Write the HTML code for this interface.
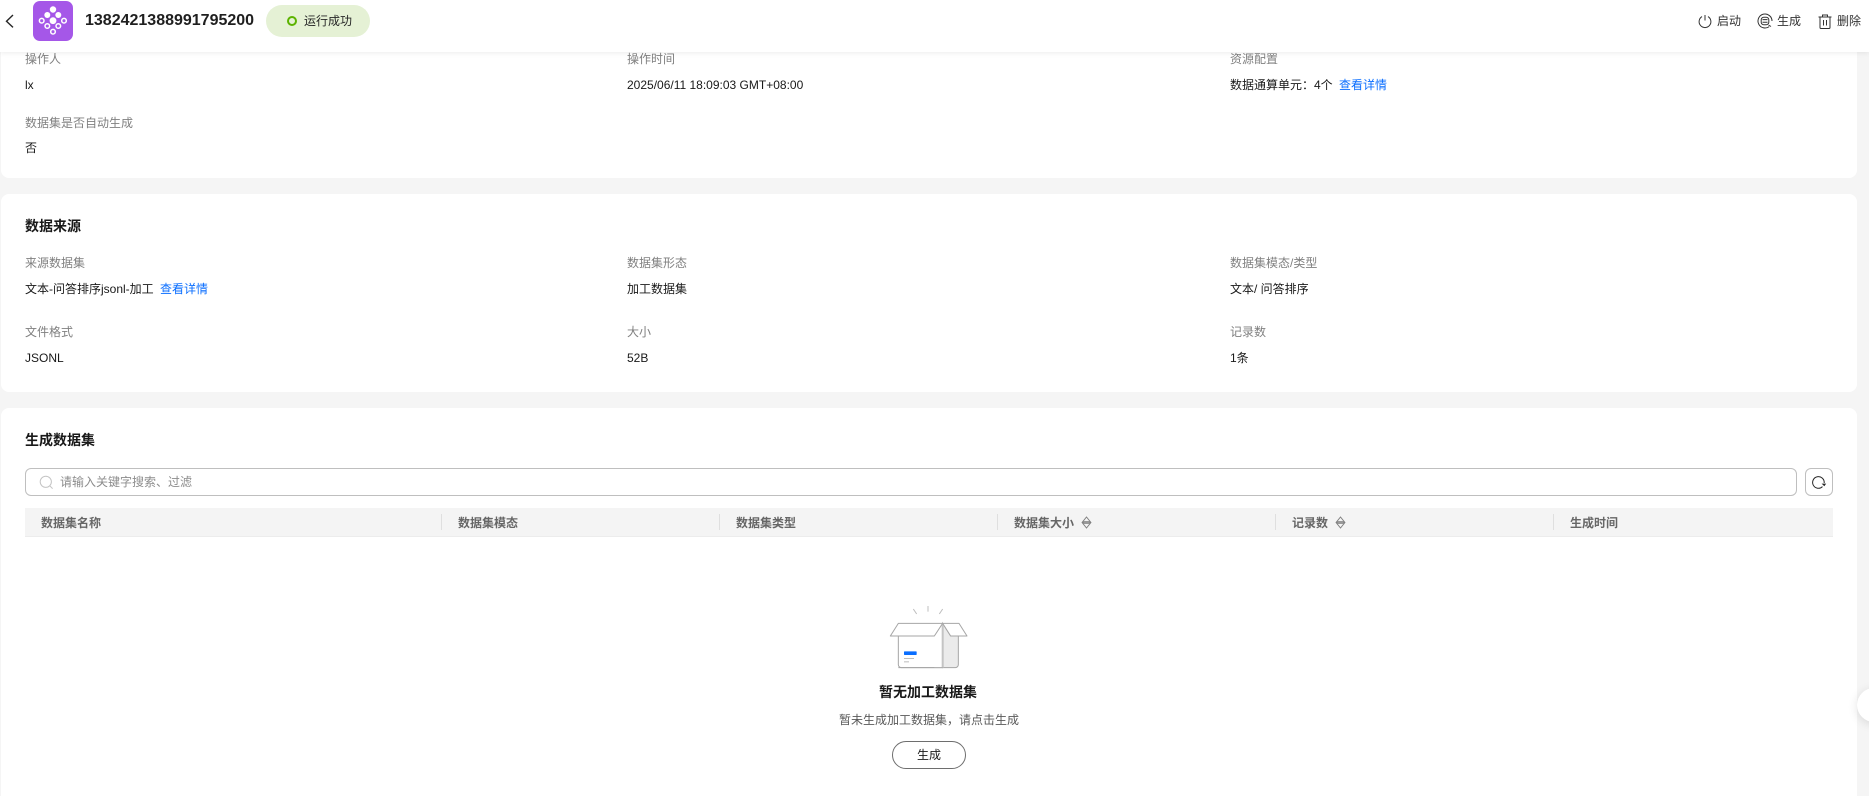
<!DOCTYPE html>
<html lang="zh">
<head>
<meta charset="utf-8">
<title>数据集详情</title>
<style>
html,body{margin:0;padding:0;width:1869px;height:796px;overflow:hidden;background:#f5f5f5;}
body{position:relative;font-family:"Liberation Sans","Noto Sans CJK SC",sans-serif;font-size:12px;color:#191919;}
.a{position:absolute;white-space:nowrap;line-height:18px;}
.card{position:absolute;left:1px;width:1856px;background:#fff;border-radius:8px;}
.l{color:#808080;}
.t{font-size:14px;font-weight:700;color:#191919;line-height:20px;}
.link{color:#0a6eff;}
.th{color:#666;font-weight:700;}
.sep{position:absolute;top:514px;width:1px;height:16px;background:#dfdfdf;}
svg{position:absolute;display:block;overflow:visible;}
</style>
</head>
<body>
<div class="card" style="top:0;height:178px;"></div>
<div class="card" style="top:194px;height:198px;"></div>
<div class="card" style="top:408px;height:400px;"></div>

<!-- card 1 -->
<div class="a l" style="left:25px;top:50px;">操作人</div>
<div class="a" style="left:25px;top:76px;">lx</div>
<div class="a l" style="left:25px;top:114px;">数据集是否自动生成</div>
<div class="a" style="left:25px;top:139px;">否</div>
<div class="a l" style="left:627px;top:50px;">操作时间</div>
<div class="a" style="left:627px;top:76px;">2025/06/11 18:09:03 GMT+08:00</div>
<div class="a l" style="left:1230px;top:50px;">资源配置</div>
<div class="a" style="left:1230px;top:76px;">数据通算单元：4个</div>
<div class="a link" style="left:1339px;top:76px;">查看详情</div>

<!-- card 2 -->
<div class="a t" style="left:25px;top:216px;">数据来源</div>
<div class="a l" style="left:25px;top:254px;">来源数据集</div>
<div class="a" style="left:25px;top:280px;">文本-问答排序jsonl-加工</div>
<div class="a link" style="left:160px;top:280px;">查看详情</div>
<div class="a l" style="left:25px;top:323px;">文件格式</div>
<div class="a" style="left:25px;top:349px;">JSONL</div>
<div class="a l" style="left:627px;top:254px;">数据集形态</div>
<div class="a" style="left:627px;top:280px;">加工数据集</div>
<div class="a l" style="left:627px;top:323px;">大小</div>
<div class="a" style="left:627px;top:349px;">52B</div>
<div class="a l" style="left:1230px;top:254px;">数据集模态/类型</div>
<div class="a" style="left:1230px;top:280px;">文本/ 问答排序</div>
<div class="a l" style="left:1230px;top:323px;">记录数</div>
<div class="a" style="left:1230px;top:349px;">1条</div>

<!-- card 3 -->
<div class="a t" style="left:25px;top:430px;">生成数据集</div>
<div style="position:absolute;left:25px;top:468px;width:1770px;height:26px;border:1px solid #bfbfbf;border-radius:6px;background:#fff;"></div>
<svg style="left:39px;top:475px;" width="15" height="15" viewBox="0 0 15 15" fill="none" stroke="#c4c4c4" stroke-width="1"><circle cx="6.8" cy="6.8" r="5.6"/><path d="M10.8 10.8L13.6 13.6"/></svg>
<div class="a" style="left:60px;top:473px;color:#8c8c8c;">请输入关键字搜索、过滤</div>
<div style="position:absolute;left:1805px;top:468px;width:26px;height:26px;border:1px solid #bfbfbf;border-radius:6px;background:#fff;"></div>
<svg style="left:1811px;top:475px;" width="16" height="14" viewBox="0 0 16 14" fill="none" stroke="#262626" stroke-width="1"><path d="M11.5 11.6A5.8 5.8 0 1 1 13.2 8"/><path d="M10.6 8.6h4.6l-1.9 2.6z" fill="#262626" stroke="none"/></svg>

<div style="position:absolute;left:25px;top:508px;width:1808px;height:28px;background:#f4f4f4;border-bottom:1px solid #ececec;"></div>
<div class="a th" style="left:41px;top:514px;">数据集名称</div>
<div class="sep" style="left:441px;"></div>
<div class="a th" style="left:458px;top:514px;">数据集模态</div>
<div class="sep" style="left:719px;"></div>
<div class="a th" style="left:736px;top:514px;">数据集类型</div>
<div class="sep" style="left:997px;"></div>
<div class="a th" style="left:1014px;top:514px;">数据集大小</div>
<svg style="left:1081px;top:516px;" width="11" height="13" viewBox="0 0 11 13"><path d="M5.5 1L9.5 6H1.5zM5.5 12L1.5 7h8z" fill="none" stroke="#808080" stroke-width="1"/><path d="M2.5 5h6v3h-6z" fill="#999"/></svg>
<div class="sep" style="left:1275px;"></div>
<div class="a th" style="left:1292px;top:514px;">记录数</div>
<svg style="left:1335px;top:516px;" width="11" height="13" viewBox="0 0 11 13"><path d="M5.5 1L9.5 6H1.5zM5.5 12L1.5 7h8z" fill="none" stroke="#808080" stroke-width="1"/><path d="M2.5 5h6v3h-6z" fill="#999"/></svg>
<div class="sep" style="left:1553px;"></div>
<div class="a th" style="left:1570px;top:514px;">生成时间</div>

<!-- empty state -->
<svg style="left:820px;top:590px;" width="230" height="100" viewBox="0 0 690 300" fill="none">
<path d="M280 57L290 72M358 72L368 57" stroke="#bdbdbd" stroke-width="3"/>
<path d="M324 48V65" stroke="#cfcfcf" stroke-width="4"/>
<path d="M235 138V224a9 9 0 0 0 9 9H368V138z" fill="#fff" stroke="#a6a6a6" stroke-width="3"/>
<path d="M368 100L392 138H415V224a9 9 0 0 1-9 9H368z" fill="#ebebeb" stroke="#a6a6a6" stroke-width="3"/>
<path d="M368 100L343 138V233H368z" fill="#fff"/>
<path d="M368 100V233" stroke="#c4c4c4" stroke-width="6"/>
<path d="M235 233H368" stroke="#a6a6a6" stroke-width="3"/>
<path d="M235 100H368L343 138H211z" fill="#fff" stroke="#a6a6a6" stroke-width="3" stroke-linejoin="round"/>
<path d="M368 100H417L441 138H392z" fill="#fff" stroke="#a6a6a6" stroke-width="3" stroke-linejoin="round"/>
<rect x="252" y="184" width="38" height="11" rx="2" fill="#0a6eff"/>
<rect x="252" y="204" width="30" height="3" fill="#bdbdbd"/>
<rect x="252" y="214" width="15" height="3" fill="#bdbdbd"/>
</svg>
<div class="a" style="left:820px;width:216px;text-align:center;top:682px;font-size:14px;font-weight:700;line-height:20px;">暂无加工数据集</div>
<div class="a" style="left:839px;width:180px;text-align:center;top:711px;color:#595959;">暂未生成加工数据集，请点击生成</div>
<div style="position:absolute;left:892px;top:741px;width:72px;height:26px;border:1px solid #6e6e6e;border-radius:14px;background:#fff;text-align:center;line-height:26px;color:#191919;">生成</div>

<!-- right floating circle -->
<div style="position:absolute;left:1857px;top:688px;width:34px;height:34px;border-radius:50%;background:#fff;box-shadow:0 2px 10px rgba(0,0,0,.12);"></div>

<!-- header -->
<div style="position:absolute;left:0;top:0;width:1869px;height:52px;background:#fff;box-shadow:0 1px 5px rgba(0,0,0,.08);"></div>
<svg style="left:4px;top:13px;" width="11" height="16" viewBox="0 0 11 16" fill="none" stroke="#262626" stroke-width="1.4"><path d="M9 2L2.5 8.2 9 14.4"/></svg>
<div style="position:absolute;left:33px;top:1px;width:40px;height:40px;border-radius:7px;background:#a557e8;"></div>
<svg style="left:33px;top:1px;" width="40" height="40" viewBox="0 0 40 40">
<g fill="#fff"><circle cx="20" cy="8.5" r="3.2"/><circle cx="14.3" cy="14" r="3"/><circle cx="25.3" cy="14" r="3"/><circle cx="20" cy="19.7" r="3.4"/></g>
<g fill="none" stroke="#fff" stroke-width="1.5"><circle cx="8.7" cy="19.7" r="2.3"/><circle cx="31" cy="19.7" r="2.3"/><circle cx="14.3" cy="25" r="2.3"/><circle cx="25.3" cy="25" r="2.3"/><circle cx="20" cy="30.7" r="2.3"/></g>
</svg>
<div class="a" style="left:85px;top:11px;font-size:16px;font-weight:700;line-height:20px;color:#1f1f1f;">1382421388991795200</div>
<div style="position:absolute;left:266px;top:5px;width:104px;height:32px;border-radius:16px;background:#e5f1d5;"></div>
<div style="position:absolute;left:287px;top:16px;width:6px;height:6px;border:2px solid #5cb300;border-radius:50%;"></div>
<div class="a" style="left:304px;top:12px;color:#262626;">运行成功</div>

<svg style="left:1698px;top:14px;" width="14" height="15" viewBox="0 0 14 15" fill="none" stroke="#333" stroke-width="1"><path d="M4 2.6A5.9 5.9 0 1 0 10 2.6"/><path d="M7 1V6.5"/></svg>
<div class="a" style="left:1717px;top:12px;color:#333;">启动</div>
<svg style="left:1757px;top:13px;" width="16" height="16" viewBox="0 0 16 16" fill="none" stroke="#333" stroke-width="1"><path d="M12.2 13.6A7 7 0 1 1 15 8"/><rect x="4.2" y="4.2" width="7.6" height="7.6" rx="2.6"/><path d="M5.5 6.6h5M5.5 9.2h5"/><path d="M11.5 12l2.5 1.5"/></svg>
<div class="a" style="left:1777px;top:12px;color:#333;">生成</div>
<svg style="left:1818px;top:14px;" width="14" height="15" viewBox="0 0 14 15" fill="none" stroke="#333" stroke-width="1"><path d="M.5 3h13M4.5 3V1h5v2M2 3v10.5a1 1 0 0 0 1 1h8a1 1 0 0 0 1-1V3M5.5 6v5.5M8.5 6v5.5"/></svg>
<div class="a" style="left:1837px;top:12px;color:#333;">删除</div>
</body>
</html>
